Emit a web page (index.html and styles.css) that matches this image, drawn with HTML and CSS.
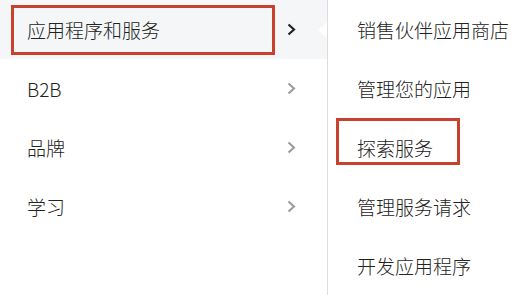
FILE: index.html
```html
<!DOCTYPE html>
<html lang="zh-CN">
<head>
<meta charset="utf-8">
<title>菜单</title>
<link rel="stylesheet" href="styles.css">
</head>
<body>
<div class="menu">
  <div class="main">
    <div class="item active">
      <span class="label boxed">应用程序和服务</span>
      <svg class="chev" width="9" height="13" viewBox="0 0 9 13"><polyline points="1.5,1.5 7,6.5 1.5,11.5" fill="none" stroke="currentColor" stroke-width="2.2"/></svg>
      <span class="notch"></span>
    </div>
    <div class="item">
      <span class="label">B2B</span>
      <svg class="chev" width="9" height="13" viewBox="0 0 9 13"><polyline points="1.5,1.5 7,6.5 1.5,11.5" fill="none" stroke="currentColor" stroke-width="2"/></svg>
    </div>
    <div class="item">
      <span class="label">品牌</span>
      <svg class="chev" width="9" height="13" viewBox="0 0 9 13"><polyline points="1.5,1.5 7,6.5 1.5,11.5" fill="none" stroke="currentColor" stroke-width="2"/></svg>
    </div>
    <div class="item">
      <span class="label">学习</span>
      <svg class="chev" width="9" height="13" viewBox="0 0 9 13"><polyline points="1.5,1.5 7,6.5 1.5,11.5" fill="none" stroke="currentColor" stroke-width="2"/></svg>
    </div>
  </div>
  <div class="sub">
    <div class="sub-item"><span class="sub-label">销售伙伴应用商店</span></div>
    <div class="sub-item"><span class="sub-label">管理您的应用</span></div>
    <div class="sub-item top"><span class="sub-label boxed">探索服务</span></div>
    <div class="sub-item"><span class="sub-label">管理服务请求</span></div>
    <div class="sub-item"><span class="sub-label">开发应用程序</span></div>
  </div>
</div>
</body>
</html>
```

FILE: styles.css
```css
html, body {
  margin: 0;
  padding: 0;
  background: #ffffff;
}
body {
  font-family: "Noto Sans CJK SC", "Noto Sans", sans-serif;
  font-weight: 300;
  color: #222222;
  font-size: 19px;
}
.menu {
  display: flex;
  width: 520px;
  height: 295px;
  overflow: hidden;
}
.main {
  width: 327px;
  flex: none;
  display: flex;
  flex-direction: column;
}
.item {
  position: relative;
  height: 59px;
  display: flex;
  align-items: center;
  padding-left: 11px;
  box-sizing: border-box;
  color: #999999;
}
.item.active {
  background: #f4f6f7;
  color: #222222;
}
.label {
  display: flex;
  align-items: center;
  width: 264px;
  height: 50px;
  box-sizing: border-box;
  border: 3px solid transparent;
  padding-left: 13px;
  color: #222222;
  line-height: 24px;
  white-space: nowrap;
}
.label.boxed {
  border-color: #c8412c;
}
.chev {
  margin-left: 12px;
  display: block;
}
.notch {
  position: absolute;
  right: 0;
  top: 22px;
  width: 0;
  height: 0;
  border-top: 8px solid transparent;
  border-bottom: 8px solid transparent;
  border-right: 9px solid #ffffff;
}
.sub {
  flex: 1;
  min-width: 0;
  border-left: 1px solid #dddddd;
  display: flex;
  flex-direction: column;
}
.sub-item {
  height: 59px;
  display: flex;
  align-items: center;
  padding-left: 8px;
  box-sizing: border-box;
  flex: none;
  white-space: nowrap;
}
.sub-item.top {
  align-items: flex-start;
}
.sub-label {
  display: block;
  border: 3px solid transparent;
  padding: 0 18px;
  line-height: 24px;
  white-space: nowrap;
}
.sub-label.boxed {
  border-color: #c8412c;
  padding: 15px 24px 2px 18px;
}
```
